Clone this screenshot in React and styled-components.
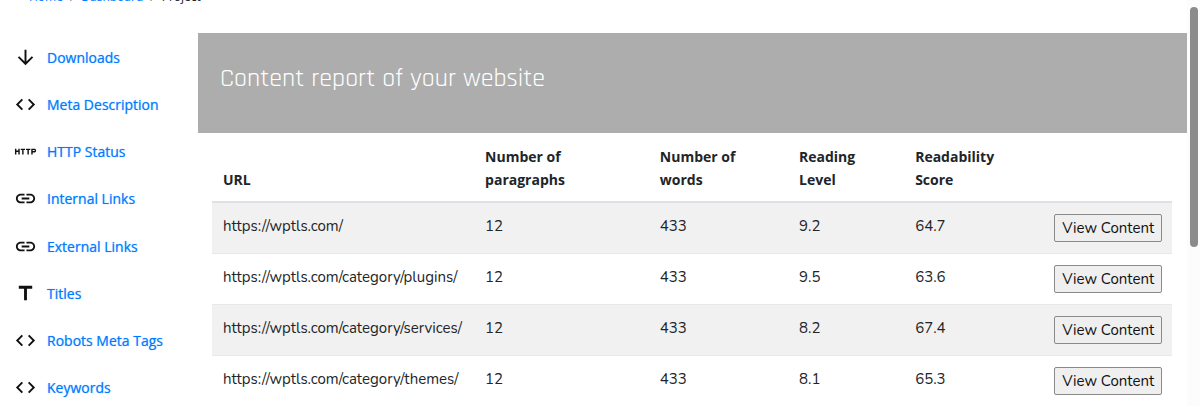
import styled, { createGlobalStyle } from 'styled-components';
import {
  MdArrowDownward,
  MdCode,
  MdHttp,
  MdLink,
  MdTitle,
} from 'react-icons/md';

const navItems = [
  { label: 'Downloads', icon: MdArrowDownward },
  { label: 'Meta Description', icon: MdCode },
  { label: 'HTTP Status', icon: MdHttp },
  { label: 'Internal Links', icon: MdLink },
  { label: 'External Links', icon: MdLink },
  { label: 'Titles', icon: MdTitle },
  { label: 'Robots Meta Tags', icon: MdCode },
  { label: 'Keywords', icon: MdCode },
];

const columns = [
  { title: 'URL', width: '27.3%' },
  { title: 'Number of paragraphs', width: '18.2%' },
  { title: 'Number of words', width: '14.5%' },
  { title: 'Reading Level', width: '12.1%' },
  { title: 'Readability Score', width: '14.5%' },
];

const rows = [
  { url: 'https://wptls.com/', paragraphs: 12, words: 433, level: 9.2, score: 64.7 },
  { url: 'https://wptls.com/category/plugins/', paragraphs: 12, words: 433, level: 9.5, score: 63.6 },
  { url: 'https://wptls.com/category/services/', paragraphs: 12, words: 433, level: 8.2, score: 67.4 },
  { url: 'https://wptls.com/category/themes/', paragraphs: 12, words: 433, level: 8.1, score: 65.3 },
];

const GlobalStyle = createGlobalStyle`
  * {
    box-sizing: border-box;
  }

  body {
    margin: 0;
    background-color: #fff;
    color: #212529;
    font-family: Nunito, Lato, sans-serif;
    font-size: 15px;
    line-height: 23px;
  }
`;

const Page = styled.div`
  display: flex;
  height: 100vh;
  overflow: hidden;
`;

const Main = styled.div`
  flex: 1;
  min-width: 0;
  display: flex;
  flex-direction: column;
`;

const Breadcrumb = styled.nav`
  display: flex;
  align-items: flex-end;
  height: 8px;
  flex-shrink: 0;
  gap: 7px;
  padding-left: 29px;
  overflow: hidden;
  font-family: 'Open Sans', sans-serif;
  font-size: 12px;
  line-height: 22px;
  color: #6c757d;

  a {
    color: #007bff;
    text-decoration: none;
  }
`;

const Current = styled.span`
  color: #212529;
`;

const Content = styled.div`
  flex: 1;
  min-height: 0;
  display: flex;
`;

const Sidebar = styled.nav`
  width: 198px;
  flex-shrink: 0;
  display: flex;
  flex-direction: column;
  justify-content: space-between;
  padding: 37px 0 6px 14px;
`;

const NavLink = styled.a`
  display: flex;
  align-items: center;
  gap: 10px;
  height: 24px;
  color: #007bff;
  font-family: 'Open Sans', sans-serif;
  font-size: 14px;
  text-decoration: none;
  text-shadow: 0 0 1px rgba(0, 123, 255, 0.6);

  svg {
    flex-shrink: 0;
    width: 23px;
    height: 23px;
    color: #111;
  }
`;

const Report = styled.main`
  flex: 1;
  min-width: 0;
  padding-top: 25px;
`;

const Banner = styled.header`
  height: 100px;
  padding: 27px 22px;
  background-color: #adadad;
`;

const Title = styled.h1`
  margin: 0;
  color: #fff;
  font-family: Rajdhani, Roboto, sans-serif;
  font-size: 26px;
  font-weight: 400;
  line-height: 37px;
`;

const TableWrap = styled.div`
  padding: 0 15px 0 14px;
`;

const Table = styled.table`
  width: 100%;
  table-layout: fixed;
  border-collapse: separate;
  border-spacing: 0;
`;

const HeadCell = styled.th`
  width: ${({ $width }) => $width};
  padding: 12px 11px 10px;
  border-bottom: 2px solid #dee2e6;
  font-family: 'Open Sans', sans-serif;
  font-size: 14px;
  font-weight: 700;
  text-align: left;
  vertical-align: bottom;
`;

const Row = styled.tr`
  background-color: ${({ $striped }) => ($striped ? '#f1f1f1' : '#fff')};
`;

const Cell = styled.td`
  padding: 11px;
  border-bottom: 1px solid #e6e8ea;
  line-height: 25px;
  text-align: ${({ $align }) => $align || 'left'};
  vertical-align: top;
  white-space: nowrap;
`;

const ViewButton = styled.button`
  display: inline-block;
  height: 28px;
  padding: 0 7px;
  border: 1px solid #8a8a8a;
  border-radius: 2px;
  background-color: #efefef;
  color: #111;
  font: inherit;
  vertical-align: top;
  cursor: pointer;
`;

const ScrollTrack = styled.div`
  width: 13px;
  flex-shrink: 0;
  padding: 7px 2px 7px 3px;
  background-color: #fcfcfc;
`;

const ScrollThumb = styled.div`
  height: 240px;
  border-radius: 4px;
  background-color: #8b8b8b;
`;

function App() {
  return (
    <>
      <GlobalStyle />
      <Page>
        <Main>
          <Breadcrumb aria-label="Breadcrumb">
            <a href="#home">Home</a>
            <span>/</span>
            <a href="#dashboard">Dashboard</a>
            <span>/</span>
            <Current>Project</Current>
          </Breadcrumb>

          <Content>
            <Sidebar aria-label="Reports">
              {navItems.map(({ label, icon: Icon }) => (
                <NavLink key={label} href="#report">
                  <Icon aria-hidden="true" />
                  {label}
                </NavLink>
              ))}
            </Sidebar>

            <Report>
              <Banner>
                <Title>Content report of your website</Title>
              </Banner>
              <TableWrap>
                <Table>
                  <thead>
                    <tr>
                      {columns.map(({ title, width }) => (
                        <HeadCell key={title} $width={width}>{title}</HeadCell>
                      ))}
                      <HeadCell aria-label="Actions" />
                    </tr>
                  </thead>
                  <tbody>
                    {rows.map((row, index) => (
                      <Row key={row.url} $striped={index % 2 === 0}>
                        <Cell>{row.url}</Cell>
                        <Cell>{row.paragraphs}</Cell>
                        <Cell>{row.words}</Cell>
                        <Cell>{row.level}</Cell>
                        <Cell>{row.score}</Cell>
                        <Cell $align="right">
                          <ViewButton type="button">View Content</ViewButton>
                        </Cell>
                      </Row>
                    ))}
                  </tbody>
                </Table>
              </TableWrap>
            </Report>
          </Content>
        </Main>

        <ScrollTrack>
          <ScrollThumb />
        </ScrollTrack>
      </Page>
    </>
  );
}

export default App;
